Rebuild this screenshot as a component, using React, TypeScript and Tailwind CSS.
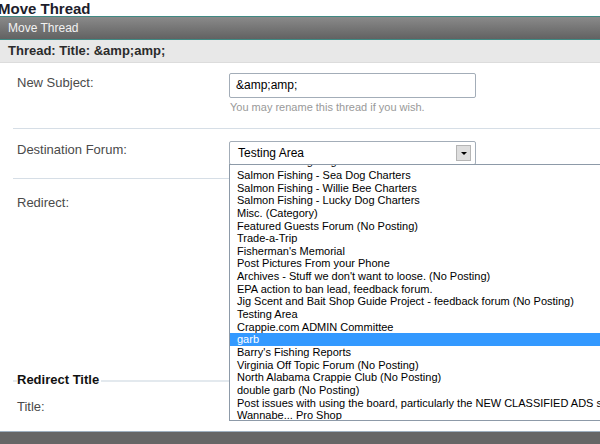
const forums = [
  "Salmon Fishing - Sea Dog Charters",
  "Salmon Fishing - Willie Bee Charters",
  "Salmon Fishing - Lucky Dog Charters",
  "Misc. (Category)",
  "Featured Guests Forum (No Posting)",
  "Trade-a-Trip",
  "Fisherman's Memorial",
  "Post Pictures From your Phone",
  "Archives - Stuff we don't want to loose. (No Posting)",
  "EPA action to ban lead, feedback forum.",
  "Jig Scent and Bait Shop Guide Project - feedback forum (No Posting)",
  "Testing Area",
  "Crappie.com ADMIN Committee",
  "garb",
  "Barry's Fishing Reports",
  "Virginia Off Topic Forum (No Posting)",
  "North Alabama Crappie Club (No Posting)",
  "double garb (No Posting)",
  "Post issues with using the board, particularly the NEW CLASSIFIED ADS section",
  "Wannabe... Pro Shop",
];

function ForumList() {
  return (
    <div className="absolute left-[229px] top-[164px] w-[390px] h-[257px] overflow-hidden border border-[#8d9aa8] bg-white">
      {/* previous option scrolled mostly out of view: only its descenders show */}
      <div className="h-[4px] overflow-hidden">
        <div className="-mt-[10px] h-[12.65px] leading-[12.65px] pl-[7px] text-[11px] whitespace-nowrap text-black">
          Salmon Fishing - Jig Time
        </div>
      </div>
      {forums.map((f) => (
        <div
          key={f}
          className={
            "h-[12.65px] leading-[12.65px] pl-[7px] text-[11px] whitespace-nowrap " +
            (f === "garb" ? "bg-[#3399ff] text-white" : "text-black")
          }
        >
          {f}
        </div>
      ))}
    </div>
  );
}

export default function App() {
  return (
    <div className="relative w-[600px] h-[444px] overflow-hidden bg-white flex flex-col font-['Liberation_Sans',Arial,sans-serif]">
      <h1 className="h-[16px] -ml-[2px] text-[15px] leading-[18px] font-bold text-[#1d1d2b]">Move Thread</h1>

      <div className="h-[24px] border-y border-[#3f8a84] bg-gradient-to-b from-[#8a8a8a] to-[#626262] pl-[8px] text-[12px] leading-[22px] text-[#f2f2f2]">
        Move Thread
      </div>

      <div className="h-[23px] bg-[#e8e8e8] border-b border-[#dcdcdc] pl-[8px] text-[13px] leading-[22px] font-bold text-[#2b2b2b]">
        Thread: Title: &amp;amp;amp;
      </div>

      <div className="flex-1 ml-[13px] flex flex-col text-[13px] text-[#4a4a4a]">
        <div className="h-[66px] flex border-b border-[#d6dee6]">
          <div className="w-[216px] pl-[4px] pt-[10px]">New Subject:</div>
          <div className="pt-[10px]">
            <div className="w-[247px] h-[25px] border border-[#a3adb8] rounded-[2px] pl-[6px] text-[12px] leading-[23px] text-black">
              &amp;amp;amp;
            </div>
            <div className="pl-[1px] mt-[1px] text-[11px] text-[#999]">You may rename this thread if you wish.</div>
          </div>
        </div>

        <div className="h-[50px] flex border-b border-[#d6dee6]">
          <div className="w-[216px] pl-[4px] pt-[11px]">Destination Forum:</div>
          <div className="pt-[12px]">
            <div className="w-[247px] h-[24px] border border-[#a3adb8] rounded-[2px] pl-[8px] pr-[4px] flex items-center justify-between text-[12px] text-black">
              <span>Testing Area</span>
              <span className="w-[15px] h-[16px] bg-[#dedede] border border-[#b5b5b5] flex items-center justify-center">
                <span className="w-0 h-0 border-x-[3px] border-x-transparent border-t-[3px] border-t-black" />
              </span>
            </div>
          </div>
        </div>

        <div className="h-[193px] pl-[4px] pt-[14px]">Redirect:</div>

        <div className="relative h-[16px] flex items-center">
          <div className="absolute left-0 right-0 top-[8px] border-t-2 border-[#e3e9ee]" />
          <span className="relative ml-[4px] pr-[2px] bg-white text-[13px] font-bold text-[#111]">Redirect Title</span>
        </div>

        <div className="pl-[4px] pt-[9px] text-[13px]">Title:</div>
      </div>

      <div className="h-[13px] border-t border-[#9fb0c0] bg-[#666666]" />

      <ForumList />
    </div>
  );
}
